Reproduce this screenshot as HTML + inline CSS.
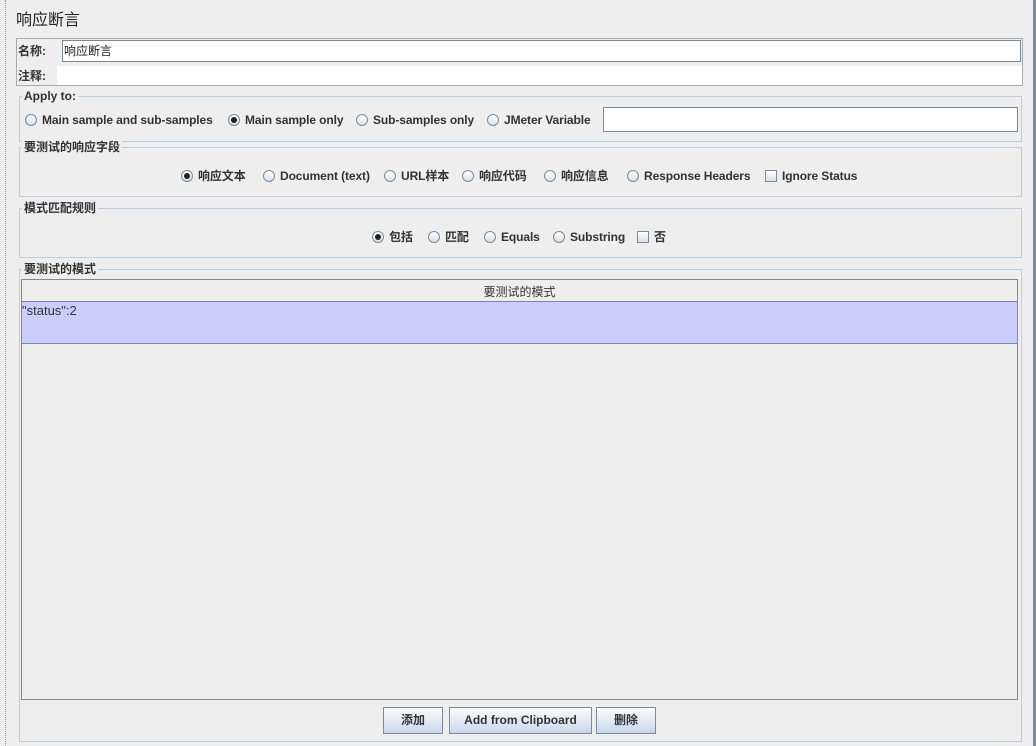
<!DOCTYPE html>
<html><head><meta charset="utf-8"><style>
*{box-sizing:border-box;margin:0;padding:0}
body{width:1036px;height:746px;background:#eeeeee;position:relative;overflow:hidden;font-family:"Liberation Sans","Noto Sans CJK SC",sans-serif;font-size:12px;color:#333}
.a{position:absolute}
.b{font-weight:bold}
.fs{position:absolute;border:1px solid #b8cfe5}
.lg{position:absolute;background:#eee;padding:0 2px;font-weight:bold;font-size:12px;line-height:14px;color:#333}
.r{position:absolute;display:flex;align-items:center;font-weight:bold;white-space:nowrap;line-height:14px;letter-spacing:-0.1px}
.rd{width:12px;height:12px;border-radius:50%;border:1px solid #7a8a99;background:linear-gradient(#fff,#d8e0ea);margin-right:5px;position:relative}
.rd.on::after{content:"";position:absolute;left:2px;top:2px;width:6px;height:6px;border-radius:50%;background:#222}
.cb{width:12px;height:12px;border:1px solid #7a8a99;background:linear-gradient(#fff,#d8e0ea);margin-right:5px}
.btn{position:absolute;top:707px;height:27px;border:1px solid #7a8a99;background:linear-gradient(#fbfcfd,#c9d8ea);font-weight:bold;text-align:center;line-height:25px;color:#333}
</style></head><body>
<div class="a" style="left:5px;top:0;width:1px;height:746px;border-left:1px dotted #8899aa"></div>
<div class="a" style="left:1033px;top:0;width:3px;height:746px;background:#7d8a96"></div>
<div class="a" style="left:16px;top:11px;font-size:16px;line-height:20px;color:#222">响应断言</div>
<div class="a" style="left:16px;top:38px;width:1007px;height:48px;border:1px solid #aaa"></div>
<div class="a b" style="left:18px;top:44px;line-height:14px">名称:</div>
<div class="a" style="left:62px;top:40px;width:959px;height:22px;background:#fff;border:1px solid #7a8a99;line-height:20px;padding-left:1px;color:#222">响应断言</div>
<div class="a b" style="left:18px;top:69px;line-height:14px">注释:</div>
<div class="a" style="left:57px;top:66px;width:965px;height:19px;background:#fff"></div>

<div class="fs" style="left:19px;top:96px;width:1003px;height:46px"></div>
<div class="lg" style="left:22px;top:89px">Apply to:</div>
<div class="r" style="left:25px;top:113px"><span class="rd"></span>Main sample and sub-samples</div>
<div class="r" style="left:228px;top:113px"><span class="rd on"></span>Main sample only</div>
<div class="r" style="left:356px;top:113px"><span class="rd"></span>Sub-samples only</div>
<div class="r" style="left:487px;top:113px"><span class="rd"></span>JMeter Variable</div>
<div class="a" style="left:603px;top:107px;width:415px;height:25px;background:#fff;border:1px solid #7a8a99"></div>

<div class="fs" style="left:19px;top:147px;width:1003px;height:50px"></div>
<div class="lg" style="left:22px;top:140px">要测试的响应字段</div>
<div class="r" style="left:181px;top:169px"><span class="rd on"></span>响应文本</div>
<div class="r" style="left:263px;top:169px"><span class="rd"></span>Document (text)</div>
<div class="r" style="left:384px;top:169px"><span class="rd"></span>URL样本</div>
<div class="r" style="left:462px;top:169px"><span class="rd"></span>响应代码</div>
<div class="r" style="left:544px;top:169px"><span class="rd"></span>响应信息</div>
<div class="r" style="left:627px;top:169px"><span class="rd"></span>Response Headers</div>
<div class="r" style="left:765px;top:169px"><span class="cb"></span>Ignore Status</div>

<div class="fs" style="left:19px;top:208px;width:1003px;height:50px"></div>
<div class="lg" style="left:22px;top:201px">模式匹配规则</div>
<div class="r" style="left:372px;top:230px"><span class="rd on"></span>包括</div>
<div class="r" style="left:428px;top:230px"><span class="rd"></span>匹配</div>
<div class="r" style="left:484px;top:230px"><span class="rd"></span>Equals</div>
<div class="r" style="left:553px;top:230px"><span class="rd"></span>Substring</div>
<div class="r" style="left:637px;top:230px"><span class="cb"></span>否</div>

<div class="fs" style="left:19px;top:269px;width:1003px;height:473px"></div>
<div class="lg" style="left:22px;top:262px">要测试的模式</div>
<div class="a" style="left:21px;top:279px;width:997px;height:421px;border:1px solid #7a8a99;background:#eee"></div>
<div class="a" style="left:22px;top:280px;width:995px;height:22px;border-bottom:1px solid #7a8a99;text-align:center;line-height:24px;color:#333">要测试的模式</div>
<div class="a" style="left:22px;top:302px;width:995px;height:42px;background:#ccccff;border-bottom:1px solid #7a8a99;line-height:18px;font-size:13px;color:#333;padding-left:0">"status":2</div>
<div class="btn" style="left:383px;width:60px">添加</div>
<div class="btn" style="left:449px;width:143px">Add from Clipboard</div>
<div class="btn" style="left:596px;width:60px">删除</div>
</body></html>
